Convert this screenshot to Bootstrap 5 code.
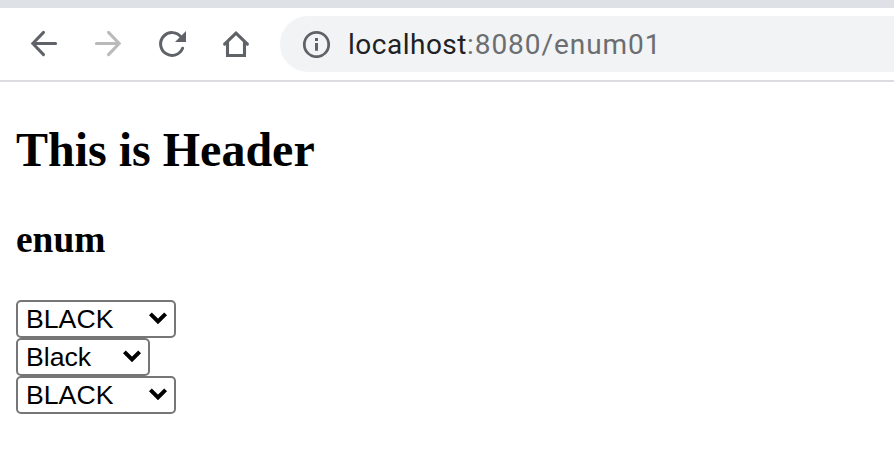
<!DOCTYPE html>
<html lang="en">
<head>
<meta charset="utf-8">
<meta name="viewport" content="width=device-width, initial-scale=1">
<title>enum01</title>
<link href="https://cdn.jsdelivr.net/npm/bootstrap@5.3.0/dist/css/bootstrap.min.css" rel="stylesheet">
<style>
  body { background: #fff; color: #000; height: 456px; overflow: hidden; }
  .tab-strip { height: 8px; background: #dee1e6; }
  .toolbar { height: 74px; border-bottom: 2px solid #dadce0; padding-left: 24px; }
  .nav-icon { width: 40px; height: 40px; margin-right: 24px; color: #5f6368; }
  .nav-icon.is-off { color: #bababa; }
  .nav-icon svg, .info-icon { display: block; fill: none; stroke: currentColor; stroke-linecap: round; }
  .address { height: 56px; padding-left: 22px; background: #f1f3f4; border-radius: 28px 0 0 28px; color: #5f6368; }
  .info-icon { margin-right: 17px; flex: none; stroke-linecap: butt; }
  .url { font: 400 28px/54px Roboto, sans-serif; padding-top: 2px; letter-spacing: .95px; color: #6b6d70; }
  .url-host { color: #202124; letter-spacing: .5px; }
  .page { padding: 40px 16px 0; }
  .page h2, .page h3 { font-family: "Liberation Serif", serif; font-weight: 700; }
  .page h2 { font-size: 48px; line-height: 56px; margin-bottom: 40px; }
  .page h3 { font-size: 37.44px; line-height: 44px; margin-bottom: 38px; }
  .page .form-select {
    width: 160px; height: 38px; padding: 1px 0 0 8px;
    border: 2px solid #767676; border-radius: 5px;
    font: 400 26.67px/33px "Liberation Sans", sans-serif; color: #000;
    background: #fff url("data:image/svg+xml,%3Csvg xmlns='http://www.w3.org/2000/svg' width='20' height='14' viewBox='0 0 20 14'%3E%3Cpath d='M2.4 1.9L10 9.5l7.6-7.6' fill='none' stroke='%23000' stroke-width='4'/%3E%3C/svg%3E") no-repeat right 6px top 10px / 20px 14px;
  }
  .page .form-select.narrow { width: 134px; }
</style>
</head>
<body>
<div class="tab-strip"></div>
<nav class="toolbar d-flex align-items-center">
  <div class="nav-icon"><svg width="40" height="40" stroke-width="3"><path d="M31.6 19.5H9M19.5 8.4L8.8 19.5L19.5 30.6"/></svg></div>
  <div class="nav-icon is-off"><svg width="40" height="40" stroke-width="3"><path d="M8.4 19.5H31M20.5 8.4L31.2 19.5L20.5 30.6"/></svg></div>
  <div class="nav-icon"><svg width="40" height="40" stroke-width="3"><path d="M30.6 24.2A11.4 11.4 0 1 1 29.3 13.4"/><path d="M34 7V18H23z" fill="currentColor" stroke="none"/></svg></div>
  <div class="nav-icon"><svg width="40" height="40" stroke-width="3.1"><path d="M8.6 20.2L20 9.1L31.4 20.2M11.5 18V31.5H28.5V18"/></svg></div>
  <div class="address d-flex align-items-center flex-grow-1">
    <svg class="info-icon" width="29" height="28" stroke-width="2.8"><circle cx="14.5" cy="14.5" r="12.2"/><path d="M14.5 13V20.8M14.5 8V11" stroke-width="3"/></svg>
    <span class="url"><span class="url-host">localhost</span>:8080/enum01</span>
  </div>
</nav>
<main class="page">
  <h2>This is Header</h2>
  <h3>enum</h3>
  <form class="d-flex flex-column">
    <select class="form-select" aria-label="Color constant"><option>BLACK</option></select>
    <select class="form-select narrow" aria-label="Color name"><option>Black</option></select>
    <select class="form-select" aria-label="Color value"><option>BLACK</option></select>
  </form>
</main>
<script src="https://cdn.jsdelivr.net/npm/bootstrap@5.3.0/dist/js/bootstrap.bundle.min.js"></script>
</body>
</html>
